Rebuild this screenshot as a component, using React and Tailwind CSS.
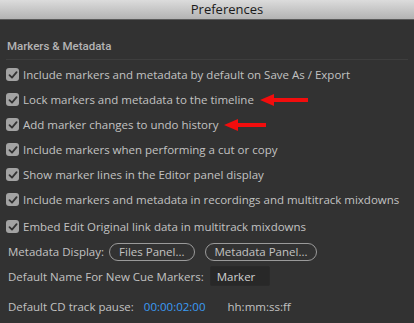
import React from "react";

const font = { fontFamily: '"Open Sans", "Lucida Grande", sans-serif' };

function Check() {
  return (
    <span className="flex h-[13px] w-[13px] shrink-0 items-center justify-center rounded-[3px] bg-[#a3a3a3]">
      <svg width="10" height="10" viewBox="0 0 10 10">
        <path d="M1.5 5.2 L4 7.6 L8.6 2.2" fill="none" stroke="#333" strokeWidth="1.8" strokeLinecap="round" strokeLinejoin="round" />
      </svg>
    </span>
  );
}

function Arrow({ width }) {
  return (
    <svg width={width} height="12" viewBox={`0 0 ${width} 12`} className="ml-[2px] shrink-0">
      <polygon points={`0,6 14,0 14,4 ${width},4 ${width},8 14,8 14,12`} fill="#f20d0d" />
    </svg>
  );
}

const rows = [
  { t: "Include markers and metadata by default on Save As / Export" },
  { t: "Lock markers and metadata to the timeline", arrow: 48 },
  { t: "Add marker changes to undo history", arrow: 42 },
  { t: "Include markers when performing a cut or copy" },
  { t: "Show marker lines in the Editor panel display" },
  { t: "Include markers and metadata in recordings and multitrack mixdowns" },
  { t: "Embed Edit Original link data in multitrack mixdowns" },
];

export default function App() {
  return (
    <div className="h-[323px] w-[414px] overflow-hidden bg-[#323232]" style={font}>
      <div className="flex h-[20px] items-center justify-center border-b border-[#5a5a5a] bg-gradient-to-b from-[#dcdcdc] to-[#b3b3b3] pl-[40px] text-[13px] text-[#1a1a1a]">
        Preferences
      </div>
      <div className="px-[6px] pt-[18px]">
        <div className="border-b border-[#3e3e3e] pb-[4px] pl-[1px] text-[11.5px] font-medium text-[#b4b4b4]" style={{ fontFamily: 'Roboto, "Open Sans", sans-serif' }}>
          Markers &amp; Metadata
        </div>
        <div className="mt-[8px] flex flex-col gap-[12px] text-[11.5px] text-[#c2c2c2]">
          {rows.map((r, i) => (
            <div key={i} className={`flex h-[13px] items-center gap-[4px] whitespace-nowrap ${i === 6 ? "mt-[2px]" : ""}`}>
              <Check />
              <span>{r.t}</span>
              {r.arrow && <Arrow width={r.arrow} />}
            </div>
          ))}
        </div>
        <div className="mt-[9px] flex flex-col pl-[2px] text-[11.5px] text-[#c2c2c2]">
          <div className="flex h-[19px] items-center whitespace-nowrap">
            <span>Metadata Display:</span>
            <span className="ml-[5px] flex h-[18px] items-center rounded-full border border-[#9a9a9a] px-[9px]">Files Panel...</span>
            <span className="ml-[10px] flex h-[18px] items-center rounded-full border border-[#9a9a9a] px-[9px]">Metadata Panel...</span>
          </div>
          <div className="mt-[5px] flex h-[20px] items-center whitespace-nowrap">
            <span>Default Name For New Cue Markers:</span>
            <span className="ml-[6px] flex h-[20px] w-[60px] items-center rounded-[2px] border border-[#2a2a2a] bg-[#282828] pl-[6px] text-[#d0d0d0]">Marker</span>
          </div>
          <div className="mt-[12px] flex h-[16px] items-center whitespace-nowrap">
            <span>Default CD track pause:</span>
            <span className="ml-[10px] text-[#3a9cf5]">00:00:02:00</span>
            <span className="ml-[22px]">hh:mm:ss:ff</span>
          </div>
        </div>
      </div>
    </div>
  );
}
